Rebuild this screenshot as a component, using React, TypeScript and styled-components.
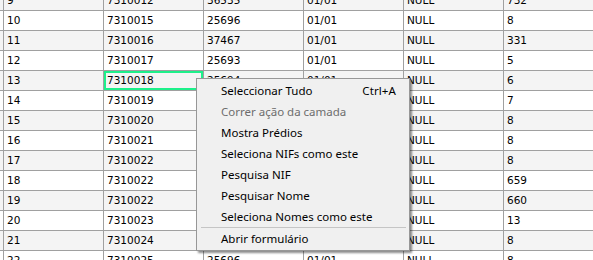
import styled, { createGlobalStyle } from 'styled-components'

const GlobalStyle = createGlobalStyle`
  html, body {
    margin: 0;
    padding: 0;
    background: #ffffff;
    overflow: hidden;
  }
`

type RowData = [string, string, string, string, string, string]

const rows: RowData[] = [
  ['9', '7310012', '36535', '01/01', 'NULL', '732'],
  ['10', '7310015', '25696', '01/01', 'NULL', '8'],
  ['11', '7310016', '37467', '01/01', 'NULL', '331'],
  ['12', '7310017', '25693', '01/01', 'NULL', '5'],
  ['13', '7310018', '25694', '01/01', 'NULL', '6'],
  ['14', '7310019', '25695', '01/01', 'NULL', '7'],
  ['15', '7310020', '25696', '01/01', 'NULL', '8'],
  ['16', '7310021', '25696', '01/01', 'NULL', '8'],
  ['17', '7310022', '25696', '01/01', 'NULL', '8'],
  ['18', '7310022', '25696', '01/01', 'NULL', '659'],
  ['19', '7310022', '25696', '01/01', 'NULL', '660'],
  ['20', '7310023', '25696', '01/01', 'NULL', '13'],
  ['21', '7310024', '25696', '01/01', 'NULL', '8'],
  ['22', '7310025', '25696', '01/01', 'NULL', '8'],
]

// the current cell (row 13, second column)
const SELECTED_ROW = 4
const SELECTED_COL = 1

const menuItems = [
  { label: 'Seleccionar Tudo', shortcut: 'Ctrl+A' },
  { label: 'Correr ação da camada', disabled: true },
  { label: 'Mostra Prédios' },
  { label: 'Seleciona NIFs como este' },
  { label: 'Pesquisa NIF' },
  { label: 'Pesquisar Nome' },
  { label: 'Seleciona Nomes como este', separatorAfter: true },
  { label: 'Abrir formulário' },
]

const App: React.FC = () => {
  return (
    <>
      <GlobalStyle />
      <Viewport>
        <Table>
          {rows.map((row, i) => (
            <Row key={i} $shaded={i % 2 === 0}>
              <Stub />
              {row.map((value, c) => (
                <Cell
                  key={c}
                  $last={c === row.length - 1}
                  $current={i === SELECTED_ROW && c === SELECTED_COL}
                >
                  {value}
                </Cell>
              ))}
            </Row>
          ))}
        </Table>

        <Menu>
          {menuItems.map((item) => (
            <div key={item.label}>
              <MenuItem $disabled={item.disabled}>
                <span>{item.label}</span>
                {item.shortcut && <Shortcut>{item.shortcut}</Shortcut>}
              </MenuItem>
              {item.separatorAfter && <Separator />}
            </div>
          ))}
        </Menu>
      </Viewport>
    </>
  )
}

const Viewport = styled.div`
  position: relative;
  width: 593px;
  height: 260px;
  overflow: hidden;
  background: #ffffff;
`

// scrolled grid: top row is cut in half
const Table = styled.div`
  display: flex;
  flex-direction: column;
  margin-top: -9px;
  font-family: 'DejaVu Sans', Tahoma, sans-serif;
  font-size: 10.5px;
  color: #000000;
`

const Row = styled.div<{ $shaded?: boolean }>`
  display: flex;
  height: 20px;
  background: ${(p) => (p.$shaded ? '#f4f4f4' : '#ffffff')};
`

const Stub = styled.div`
  flex: none;
  width: 3px;
  border-bottom: 1px solid #a0a0a0;
`

const Cell = styled.div<{ $last?: boolean; $current?: boolean }>`
  flex: ${(p) => (p.$last ? '1' : 'none')};
  width: ${(p) => (p.$last ? 'auto' : '100px')};
  box-sizing: border-box;
  border-left: 1px solid #a0a0a0;
  border-bottom: 1px solid #a0a0a0;
  padding-left: 3px;
  line-height: 19px;
  white-space: nowrap;
  overflow: hidden;
  box-shadow: ${(p) => (p.$current ? 'inset 0 0 0 2px #1ef08a' : 'none')};
`

const Menu = styled.div`
  position: absolute;
  left: 196px;
  top: 78px;
  width: 214px;
  box-sizing: border-box;
  padding: 1px 0;
  background: #f0f0f0;
  border: 1px solid #979797;
  box-shadow: 2px 2px 2px rgba(0, 0, 0, 0.45);
  font-family: 'Noto Sans', 'Open Sans', sans-serif;
  font-size: 11.5px;
  color: #000000;
`

const MenuItem = styled.div<{ $disabled?: boolean }>`
  display: flex;
  align-items: center;
  justify-content: space-between;
  height: 21px;
  padding: 0 13px 0 24px;
  color: ${(p) => (p.$disabled ? '#6d6d6d' : '#000000')};
  white-space: nowrap;
`

const Shortcut = styled.span`
  letter-spacing: 0.1px;
`

const Separator = styled.div`
  height: 1px;
  margin: 0 3px 0 4px;
  background: #c5c5c5;
`

export default App
